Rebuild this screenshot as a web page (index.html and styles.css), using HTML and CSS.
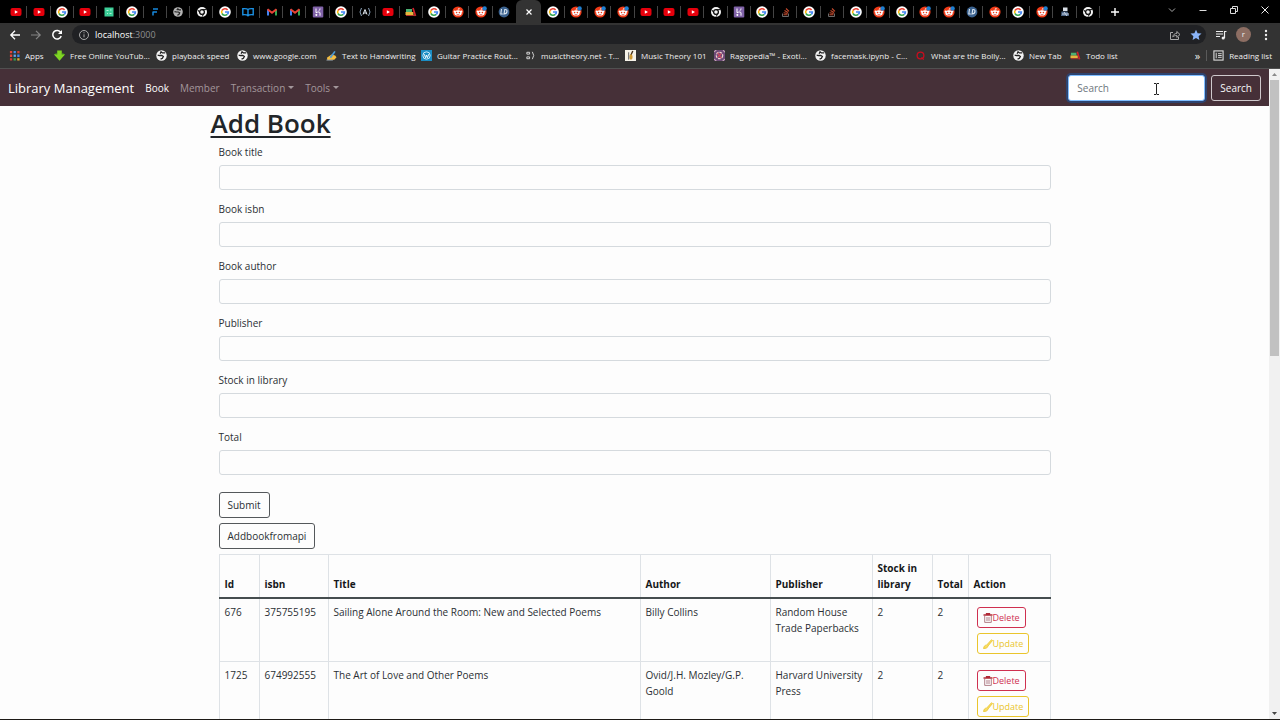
FILE: index.html
```html
<!DOCTYPE html>
<html lang="en">
<head>
<meta charset="utf-8">
<title>Library Management</title>
<link rel="stylesheet" href="styles.css">
</head>
<body>
<svg class="sprite" aria-hidden="true">
  <symbol id="yt" viewBox="0 0 12 12"><rect x="0.500" y="2" width="11" height="8" rx="2" fill="#e6000c"/><path d="M4.800 4.200v3.600L8 6z" fill="#fff"/></symbol>
  <symbol id="goog" viewBox="0 0 12 12"><circle cx="6" cy="6" r="5.800" fill="#fff"/><g fill="none" stroke-width="1.600"><path d="M8.600 3.900A3.400 3.400 0 0 0 3 4.500" stroke="#ea4335"/><path d="M3 4.500a3.400 3.400 0 0 0 0 3" stroke="#fbbc05"/><path d="M3 7.500a3.400 3.400 0 0 0 5.300.9" stroke="#34a853"/><path d="M8.300 8.400A3.200 3.200 0 0 0 9.400 6H6" stroke="#4285f4"/></g></symbol>
  <symbol id="green" viewBox="0 0 12 12"><rect x="1.500" y="1.500" width="9" height="9" fill="#3ccf98"/><path d="M3.500 4.500h2M7 4h1.500M4 7.500h1M6.500 7.500h2" stroke="#b4f2d6" fill="none"/></symbol>
  <symbol id="f" viewBox="0 0 12 12"><path d="M4 3h5M4 6h4M4 5.500v4" stroke="#1688dc" stroke-width="1.500" fill="none"/></symbol>
  <symbol id="globe-dim" viewBox="0 0 12 12"><circle cx="6" cy="6" r="4.800" fill="#b4b4b4"/><path d="M2.500 5.700l2 .3h1.800l1.400.8-.8 1.700-1.600.7M9 3.800H7L5.800 2.800 4.800 4.200" stroke="#222" stroke-width="1.200" fill="none"/></symbol>
  <symbol id="globe" viewBox="0 0 12 12"><circle cx="6" cy="6" r="5.700" fill="#f4f4f4"/><path d="M1.800 5.500l2 .5h2.500l1.700 1-1 2-2 1M10 3.200H7L5.500 2 4.500 4" stroke="#222" stroke-width="1.400" fill="none"/></symbol>
  <symbol id="chrome" viewBox="0 0 12 12"><circle cx="6" cy="6" r="5" fill="#f4f4f4"/><circle cx="6" cy="6" r="2.400" fill="none" stroke="#111" stroke-width="1.300"/><path d="M6 3.600h4.500M3.900 7.200L2 4M8 7.300L6 10.800" stroke="#111"/></symbol>
  <symbol id="book" viewBox="0 0 12 12"><path d="M6 3.500C5 2.400 3 2.500.800 2.700v6C3 8.500 5 8.500 6 9.700 7 8.500 9 8.500 11.200 8.700v-6C9 2.500 7 2.400 6 3.500v6" fill="none" stroke="#1b91e4" stroke-width="1.400"/></symbol>
  <symbol id="gmail" viewBox="0 0 12 12"><path d="M2 9.500V3.500" stroke="#4285f4" stroke-width="2"/><path d="M10 9.500V3.500" stroke="#34a853" stroke-width="2"/><path d="M1.500 3.200L6 6.700l4.500-3.500" stroke="#ea4335" stroke-width="2" fill="none"/></symbol>
  <symbol id="heroku" viewBox="0 0 12 12"><rect x="0.800" y="0.500" width="10.500" height="11" rx="1" fill="#8062a8"/><path d="M4 2.500v4.200c2-1 4-1 4 .3v2.700M8 2.500c0 1-.4 1.600-1 2.200M4 8l1.200.9L4 9.800z" stroke="#fff" fill="none"/></symbol>
  <symbol id="aparen" viewBox="0 0 12 12"><path d="M2.500 2Q-.5 6 2.500 10M9.500 2q3 4 0 8" stroke="#8fa6bd" fill="none"/><path d="M4 8.500L6 3.500l2 5M4.600 7h2.800" stroke="#e7eef5" fill="none"/></symbol>
  <symbol id="todo" viewBox="0 0 12 12"><path d="M1 3h6v3H1z" fill="#4bb072"/><path d="M0.500 6h8v3h-8z" fill="#e5b53c"/><path d="M8 2l2.500 8" stroke="#d3202c" stroke-width="1.700"/><path d="M1 9.500h10" stroke="#b2332b"/></symbol>
  <symbol id="reddit" viewBox="0 0 12 12"><circle cx="6" cy="6" r="5.600" fill="#f03a17"/><ellipse cx="6" cy="6.900" rx="3.700" ry="2.700" fill="#fff"/><circle cx="2.600" cy="5.500" r="1" fill="#fff"/><circle cx="9.400" cy="5.500" r="1" fill="#fff"/><path d="M6 4.500l.5-2 1.700.5" stroke="#fff" stroke-width=".7" fill="none"/><circle cx="4.600" cy="6.500" r=".8" fill="#f03a17"/><circle cx="7.400" cy="6.500" r=".8" fill="#f03a17"/><path d="M4.500 8.200q1.500 1 3 0" stroke="#c33" stroke-width=".6" fill="none"/></symbol>
  <symbol id="reddit-new" viewBox="0 0 12 12"><use href="#reddit"/><circle cx="9.600" cy="2.500" r="2.200" fill="#1f7fd0"/></symbol>
  <symbol id="ld" viewBox="0 0 12 12"><circle cx="6" cy="6" r="5.400" fill="#3b628f"/><path d="M3.500 3L2.800 8h2M6 8l.8-4.500c3-.5 3.200 4-.8 4.500z" stroke="#dce7f2" stroke-width="1.100" fill="none"/></symbol>
  <symbol id="stack" viewBox="0 0 12 12"><path d="M2.500 7.500v3h6v-3" stroke="#6b6b6b" fill="none"/><path d="M3.500 8.800h4M3.600 6.700l4 .8M4.500 4.500l3.600 1.900M6 2.500l3 2.900" stroke="#c2492c" stroke-width="1.100"/></symbol>
  <symbol id="figure" viewBox="0 0 12 12"><path d="M4 1.500h4.500v3.500H4z" fill="#d9dfe6"/><path d="M2.500 5.500h6L10 10H2z" fill="#4d6687"/><path d="M3 8h7M5 6l3 4" stroke="#c8d4e4"/></symbol>
  <symbol id="apps" viewBox="0 0 12 12"><path d="M1 1h2.500v2.500H1zM1 5h2.500v2.500H1z" fill="#e4453a"/><path d="M5 1h2.500v2.500H5zM9 5h2.500v2.500H9z" fill="#4489ec"/><path d="M9 1h2.500v2.500H9zM1 9h2.500v2.500H1z" fill="#cf4136"/><path d="M5 5h2.500v2.500H5z" fill="#62a8f4"/><path d="M5 9h2.500v2.500H5z" fill="#37a455"/><path d="M9 9h2.500v2.500H9z" fill="#e4ac31"/></symbol>
  <symbol id="down" viewBox="0 0 12 12"><path d="M0 5l3-2v4M12 5L9 3v4" fill="#47961a"/><path d="M3.500.500h5V5H12L6 11.700 0 5h3.500z" fill="#7fd523"/></symbol>
  <symbol id="hand" viewBox="0 0 12 12"><path d="M1 8.500L6 5l4 1 1.500 2L9 10.500 1.500 11z" fill="#f5be41"/><path d="M4 8l5-7 1.500 1-5 7z" fill="#4c9ad6"/><path d="M0.500 11h7" stroke="#9aa6ae"/></symbol>
  <symbol id="wp" viewBox="0 0 12 12"><path d="M0 0h12v12H0z" fill="#1b8dc4"/><circle cx="6" cy="6" r="4" fill="none" stroke="#d7effa"/><path d="M3.500 4.500L5 8.500l1-3 1 3 1.500-4" stroke="#fff" fill="none"/></symbol>
  <symbol id="music" viewBox="0 0 12 12"><path d="M2 2.500h3v2H2zM2 7.500h3v2H2zM8 2q3 4 0 8" stroke="#ddd" fill="none"/></symbol>
  <symbol id="guitar" viewBox="0 0 12 12"><path d="M0 0h12v12H0z" fill="#f5f2e8"/><path d="M8.500 1L6 6.500" stroke="#463018" stroke-width="1.500"/><ellipse cx="6.500" cy="7.500" rx="1.800" ry="3" fill="#d09a32"/><path d="M4 2.500v8" stroke="#555"/></symbol>
  <symbol id="raga" viewBox="0 0 12 12"><path d="M0 0h12v12H0z" fill="#6d4a78"/><circle cx="6" cy="6" r="3.500" fill="none" stroke="#eed4cf" stroke-width="1.300" stroke-dasharray="3 1"/><path d="M4 3l4 6M8 4L4 8" stroke="#d1495d" stroke-width="1.300"/><path d="M0 2.500L2.500 0M9.500 0L12 2.500M0 9.500L2.500 12M12 9.500L9.500 12" stroke="#eed4cf"/></symbol>
  <symbol id="quora" viewBox="0 0 12 12"><circle cx="6" cy="6" r="3.700" fill="none" stroke="#c90d1f" stroke-width="1.400"/><path d="M7 8l2.500 2.500" stroke="#c90d1f" stroke-width="1.400"/></symbol>
  <symbol id="list" viewBox="0 0 12 12"><rect x="1" y="1" width="10" height="10" fill="none" stroke="#ddd" stroke-width="1.200"/><path d="M3.500 3v6M5.500 4h4M5.500 6h4M5.500 8h4" stroke="#ddd"/></symbol>
  <symbol id="trash" viewBox="0 0 10 10"><path d="M.5 2h9M3.500 1.800V.7h3v1.100" fill="none" stroke="#b02a37" stroke-width="1.300"/><path d="M1.700 3v6.400h6.600V3M4 4v4M6 4v4" stroke="#a8717b" stroke-width=".9" fill="none"/></symbol>
  <symbol id="brush" viewBox="0 0 10 10"><path d="M.5 9.500C1 7 2 6 3.500 6.200L8.500.7l1 .8L5 7C4.800 9 2.500 9.500.500 9.500z" fill="#f9dd64" stroke="currentColor" stroke-width=".8"/></symbol>
</svg>

<header class="browser">
  <div class="tabstrip">
    <div class="tabs">
      <button class="tab"><svg><use href="#yt"/></svg></button>
      <button class="tab"><svg><use href="#yt"/></svg></button>
      <button class="tab"><svg><use href="#goog"/></svg></button>
      <button class="tab"><svg><use href="#yt"/></svg></button>
      <button class="tab"><svg><use href="#green"/></svg></button>
      <button class="tab"><svg><use href="#goog"/></svg></button>
      <button class="tab"><svg><use href="#f"/></svg></button>
      <button class="tab"><svg><use href="#globe-dim"/></svg></button>
      <button class="tab"><svg><use href="#chrome"/></svg></button>
      <button class="tab"><svg><use href="#goog"/></svg></button>
      <button class="tab"><svg><use href="#book"/></svg></button>
      <button class="tab"><svg><use href="#gmail"/></svg></button>
      <button class="tab"><svg><use href="#gmail"/></svg></button>
      <button class="tab"><svg><use href="#heroku"/></svg></button>
      <button class="tab"><svg><use href="#goog"/></svg></button>
      <button class="tab"><svg><use href="#aparen"/></svg></button>
      <button class="tab"><svg><use href="#yt"/></svg></button>
      <button class="tab"><svg><use href="#todo"/></svg></button>
      <button class="tab"><svg><use href="#goog"/></svg></button>
      <button class="tab"><svg><use href="#reddit"/></svg></button>
      <button class="tab"><svg><use href="#reddit-new"/></svg></button>
      <button class="tab last"><svg><use href="#ld"/></svg></button>
      <button class="tab active" aria-label="Close tab"><svg viewBox="0 0 12 12"><path d="M3.500 3.500l5 5M8.500 3.500l-5 5" stroke="#fff" stroke-width="1.200"/></svg></button>
      <button class="tab"><svg><use href="#goog"/></svg></button>
      <button class="tab"><svg><use href="#reddit-new"/></svg></button>
      <button class="tab"><svg><use href="#reddit-new"/></svg></button>
      <button class="tab"><svg><use href="#reddit-new"/></svg></button>
      <button class="tab"><svg><use href="#yt"/></svg></button>
      <button class="tab"><svg><use href="#yt"/></svg></button>
      <button class="tab"><svg><use href="#yt"/></svg></button>
      <button class="tab"><svg><use href="#chrome"/></svg></button>
      <button class="tab"><svg><use href="#heroku"/></svg></button>
      <button class="tab"><svg><use href="#goog"/></svg></button>
      <button class="tab"><svg><use href="#stack"/></svg></button>
      <button class="tab"><svg><use href="#goog"/></svg></button>
      <button class="tab"><svg><use href="#stack"/></svg></button>
      <button class="tab"><svg><use href="#goog"/></svg></button>
      <button class="tab"><svg><use href="#reddit-new"/></svg></button>
      <button class="tab"><svg><use href="#goog"/></svg></button>
      <button class="tab"><svg><use href="#reddit-new"/></svg></button>
      <button class="tab"><svg><use href="#reddit-new"/></svg></button>
      <button class="tab"><svg><use href="#ld"/></svg></button>
      <button class="tab"><svg><use href="#reddit"/></svg></button>
      <button class="tab"><svg><use href="#goog"/></svg></button>
      <button class="tab"><svg><use href="#reddit-new"/></svg></button>
      <button class="tab"><svg><use href="#figure"/></svg></button>
      <button class="tab"><svg><use href="#chrome"/></svg></button>
    </div>
    <button class="new-tab" aria-label="New tab"><svg viewBox="0 0 12 12"><path d="M6 2v8M2 6h8" stroke="#fff" stroke-width="1.400"/></svg></button>
    <div class="window-controls">
      <button aria-label="Search tabs"><svg viewBox="0 0 12 12"><path d="M3 4.500l3 3 3-3" stroke="#aaa" fill="none"/></svg></button>
      <button aria-label="Minimize"><svg viewBox="0 0 12 12"><path d="M2.500 6.500h7" stroke="#ddd"/></svg></button>
      <button aria-label="Restore"><svg viewBox="0 0 12 12"><path d="M2.500 4.500h5v5h-5zM4.500 4V2.500h5v5H8" stroke="#ddd" fill="none"/></svg></button>
      <button aria-label="Close"><svg viewBox="0 0 12 12"><path d="M2.500 2.500l7 7M9.500 2.500l-7 7" stroke="#eee"/></svg></button>
    </div>
  </div>

  <div class="toolbar">
    <button aria-label="Back"><svg viewBox="0 0 12 12"><path d="M11 6H2M6 1.800L1.800 6 6 10.200" stroke="#fff" stroke-width="1.300" fill="none"/></svg></button>
    <button aria-label="Forward"><svg viewBox="0 0 12 12"><path d="M1 6h9M6 1.800L10.200 6 6 10.200" stroke="#858585" stroke-width="1.200" fill="none"/></svg></button>
    <button aria-label="Reload"><svg viewBox="0 0 12 12"><path d="M9.800 3.500A4.300 4.300 0 1 0 10.200 7" stroke="#fff" stroke-width="1.500" fill="none"/><path d="M11 1v4H7z" fill="#fff"/></svg></button>
    <div class="address">
      <svg viewBox="0 0 12 12"><circle cx="6" cy="6" r="4.500" stroke="#aaa" fill="none"/><path d="M6 5.300v3M6 3.300v1" stroke="#aaa"/></svg>
      <span class="url">localhost<span class="port">:3000</span></span>
      <svg viewBox="0 0 12 12"><path d="M4 3.500H1.500v7h8V8M3.800 8c.3-2.500 2-3.500 4-3.500V2.500L11 5.500l-3.200 3v-2c-1.800 0-3 .3-4 1.500z" stroke="#aaa" fill="none"/></svg>
      <svg class="star" viewBox="0 0 12 12"><path d="M6 .7l1.600 3.500 3.900.4-2.900 2.600.8 3.800L6 9.100l-3.400 1.900.8-3.800L.500 4.600l3.900-.4z" fill="#8ab4f8"/></svg>
    </div>
    <button aria-label="Media"><svg viewBox="0 0 12 12"><path d="M1 2.500h7M1 5h7M1 7.500h4M9.500 9V2.500h2" stroke="#eee" stroke-width="1.200" fill="none"/><circle cx="8.200" cy="9" r="1.600" fill="#eee"/></svg></button>
    <button class="avatar">r</button>
    <button aria-label="Menu"><svg viewBox="0 0 12 12" fill="#eee"><circle cx="6" cy="2" r="1.200"/><circle cx="6" cy="6" r="1.200"/><circle cx="6" cy="10" r="1.200"/></svg></button>
  </div>

  <nav class="bookmarks">
    <a href="#"><svg><use href="#apps"/></svg>Apps</a>
    <a href="#"><svg><use href="#down"/></svg>Free Online YouTub...</a>
    <a href="#"><svg><use href="#globe"/></svg>playback speed</a>
    <a href="#"><svg><use href="#globe"/></svg>www.google.com</a>
    <a href="#"><svg><use href="#hand"/></svg>Text to Handwriting</a>
    <a href="#"><svg><use href="#wp"/></svg>Guitar Practice Rout...</a>
    <a href="#"><svg><use href="#music"/></svg>musictheory.net - T...</a>
    <a href="#"><svg><use href="#guitar"/></svg>Music Theory 101</a>
    <a href="#"><svg><use href="#raga"/></svg>Ragopedia™ - Exoti...</a>
    <a href="#"><svg><use href="#globe"/></svg>facemask.ipynb - C...</a>
    <a href="#"><svg><use href="#quora"/></svg>What are the Bolly...</a>
    <a href="#"><svg><use href="#globe"/></svg>New Tab</a>
    <a href="#"><svg><use href="#todo"/></svg>Todo list</a>
    <button class="more">»</button>
    <a class="reading" href="#"><svg><use href="#list"/></svg>Reading list</a>
  </nav>
</header>

<div class="viewport">
  <div class="page">
    <nav class="navbar">
      <a class="brand" href="#">Library Management</a>
      <a class="current" href="#">Book</a>
      <a href="#">Member</a>
      <a class="dropdown" href="#">Transaction</a>
      <a class="dropdown" href="#">Tools</a>
      <form class="search">
        <div class="search-box">
          <input type="search" placeholder="Search" aria-label="Search">
          <svg class="pointer" viewBox="0 0 7 12"><path d="M1 .5h2l.5.500.500-.5h2M3.500 1v10M1 11.500h2l.5-.5.500.500h2" stroke="#222" fill="none"/></svg>
        </div>
        <button type="button">Search</button>
      </form>
    </nav>

    <main class="content">
      <h1>Add Book</h1>
      <form class="book-form">
        <div class="field"><label for="title">Book title</label><input id="title" type="text"></div>
        <div class="field"><label for="isbn">Book isbn</label><input id="isbn" type="text"></div>
        <div class="field"><label for="author">Book author</label><input id="author" type="text"></div>
        <div class="field"><label for="publisher">Publisher</label><input id="publisher" type="text"></div>
        <div class="field"><label for="stock">Stock in library</label><input id="stock" type="text"></div>
        <div class="field"><label for="total">Total</label><input id="total" type="text"></div>
        <div class="actions">
          <button class="btn" type="button">Submit</button>
          <button class="btn" type="button">Addbookfromapi</button>
        </div>
      </form>

      <table class="books">
        <colgroup><col class="c-id"><col class="c-isbn"><col><col class="c-author"><col class="c-publisher"><col class="c-stock"><col class="c-total"><col class="c-action"></colgroup>
        <thead>
          <tr><th>Id</th><th>isbn</th><th>Title</th><th>Author</th><th>Publisher</th><th>Stock in library</th><th>Total</th><th>Action</th></tr>
        </thead>
        <tbody>
          <tr>
            <td>676</td><td>375755195</td><td>Sailing Alone Around the Room: New and Selected Poems</td><td>Billy Collins</td><td>Random House Trade Paperbacks</td><td>2</td><td>2</td>
            <td><div class="row-actions"><button class="small delete"><svg><use href="#trash"/></svg>Delete</button><button class="small update"><svg><use href="#brush"/></svg>Update</button></div></td>
          </tr>
          <tr>
            <td>1725</td><td>674992555</td><td>The Art of Love and Other Poems</td><td>Ovid/J.H. Mozley/G.P. Goold</td><td>Harvard University Press</td><td>2</td><td>2</td>
            <td><div class="row-actions"><button class="small delete"><svg><use href="#trash"/></svg>Delete</button><button class="small update"><svg><use href="#brush"/></svg>Update</button></div></td>
          </tr>
        </tbody>
      </table>
    </main>
  </div>
  <div class="scrollbar" aria-hidden="true">
    <svg viewBox="0 0 11 11"><path d="M3 7l2.500-3L8 7z" fill="#8a8a8a"/></svg>
    <div class="track"><div class="thumb"></div></div>
    <svg viewBox="0 0 11 11"><path d="M3 4l2.500 3L8 4z" fill="#444"/></svg>
  </div>
</div>
<footer class="taskbar"></footer>
</body>
</html>
```
FILE: styles.css
```css
* { box-sizing: border-box; }

body {
  margin: 0;
  height: 100vh;
  display: flex;
  flex-direction: column;
  overflow: hidden;
  background: #fdfdfd;
  color: #2b2f33;
  font: 10px/16px "Open Sans", "Noto Sans", sans-serif;
}

button, input { font: inherit; color: inherit; }
button { padding: 0; border: 0; background: none; }
a { color: inherit; text-decoration: none; }
svg { display: block; flex: none; width: 12px; height: 12px; }
.sprite { position: absolute; width: 0; height: 0; }

/* Browser chrome */
.browser { background: #333; color: #eee; border-bottom: 1px solid #505050; }

.tabstrip { display: flex; height: 23px; background: #000; }
.tabs { flex: 1; display: flex; padding-left: 4px; }
.tab {
  flex: 1 1 0;
  display: flex;
  align-items: center;
  justify-content: center;
  background: linear-gradient(#444, #444) right center / 1px 12px no-repeat;
}
.tab.last { background: none; }
.tab.active { flex-grow: 1.1; background: #333; border-radius: 6px 6px 0 0; }
.new-tab { width: 30px; display: flex; align-items: center; justify-content: center; }
.window-controls { display: flex; width: 150px; padding: 0 0 4px 26px; }
.window-controls button { width: 31px; display: flex; align-items: center; justify-content: center; }

.toolbar { display: flex; align-items: center; gap: 9px; height: 23px; padding: 0 8px 0 9px; }
.address {
  flex: 1;
  display: flex;
  align-items: center;
  gap: 5px;
  height: 19px;
  padding: 0 4px 0 6px;
  border-radius: 10px;
  background: #202124;
}
.star { margin-left: 4px; }
.toolbar > button { display: flex; justify-content: center; }
.url { flex: 1; font-size: 9px; color: #fff; }
.port { color: #8f8f8f; }
.avatar { width: 15px; height: 15px; border-radius: 8px; background: #8d6e63; font-size: 8px; line-height: 14px; }

.bookmarks {
  display: grid;
  grid-template-columns: 45px 102px 81px 89px 95px 104px 100px 89px 101px 100px 98px 57px 1fr auto auto;
  align-items: center;
  height: 22px;
  padding: 0 8px 3px 9px;
  font-size: 8px;
  white-space: nowrap;
}
.bookmarks a { display: flex; align-items: center; gap: 5px; }
.bookmarks svg { width: 11px; height: 11px; }
.more { padding-right: 6px; font-size: 11px; line-height: 12px; }
.bookmarks .reading { padding-left: 6px; border-left: 1px solid #5a5a5a; line-height: 11px; }

/* Page */
.viewport { flex: 1; min-height: 0; display: flex; }
.page { flex: 1; min-width: 0; overflow: hidden; }

.navbar {
  display: flex;
  align-items: center;
  gap: 11px;
  height: 37px;
  padding: 0 8px;
  background: #463038;
  color: #a3979b;
}
.brand { font-size: 13px; color: #fff; }
.current { color: #fff; }
.dropdown::after {
  content: "";
  display: inline-block;
  margin-left: 3px;
  vertical-align: 3px;
  border: 3px solid transparent;
  border-top-color: currentColor;
  border-bottom: 0;
}
.search { display: flex; gap: 6px; margin-left: auto; }
.search-box { position: relative; }
.search input {
  width: 137px;
  height: 26px;
  padding: 0 8px;
  border: 1px solid #80bdff;
  border-radius: 3px;
  background: #fff;
  box-shadow: 0 0 0 2px #2e4470;
  appearance: none;
}
.search input::placeholder { color: #6c757d; }
.pointer { position: absolute; top: 8px; right: 45px; width: 7px; height: 12px; }
.search button { padding: 0 8px; border: 1px solid #cfc9cc; border-radius: 3px; color: #f8f9fa; }

.content { max-width: 848px; margin: 0 auto; }
h1 { margin: 0; font-size: 26px; line-height: 34px; font-weight: 600; color: #212529; text-decoration: underline; text-decoration-thickness: 2px; text-underline-offset: 3px; }
.book-form, .books { margin: 0 8px; }
.book-form { padding-top: 4px; }
.field { display: flex; flex-direction: column; gap: 5px; margin-bottom: 11px; }
.field input { height: 25px; padding: 0 8px; border: 1px solid #d5dade; border-radius: 3px; background: #fdfdfd; }
.actions { display: flex; flex-direction: column; align-items: flex-start; gap: 5px; padding: 6px 0 5px; }
.btn { height: 26px; padding: 0 8px; border: 1px solid #54585b; border-radius: 3px; }

.books { width: calc(100% - 16px); table-layout: fixed; border-collapse: collapse; }
.books th, .books td { padding: 5px; border: 1px solid #dee2e6; text-align: left; vertical-align: top; }
.books th { vertical-align: bottom; border-bottom: 2px solid #454d4f; color: #16181a; }
.c-id { width: 40px; }
.c-isbn { width: 69px; }
.c-author { width: 130px; }
.c-publisher { width: 102px; }
.c-stock { width: 60px; }
.c-total { width: 36px; }
.c-action { width: 82px; }
.row-actions { display: flex; flex-direction: column; align-items: flex-start; gap: 5px; padding: 3px 3px 2px; }
.small { display: flex; align-items: center; height: 21px; padding: 0 5px; border: 1px solid; border-radius: 3px; font-size: 9px; }
.small svg { width: 10px; height: 10px; }
.delete { color: #cf3050; }
.update { color: #eac52c; }

.scrollbar { width: 11px; display: flex; flex-direction: column; background: #f1f1f1; }
.scrollbar svg { width: 11px; height: 11px; }
.track { flex: 1; padding: 0 1px; }
.thumb { height: 44%; background: #c1c1c1; }
.taskbar { height: 1px; background: #1d1a16; }
```
